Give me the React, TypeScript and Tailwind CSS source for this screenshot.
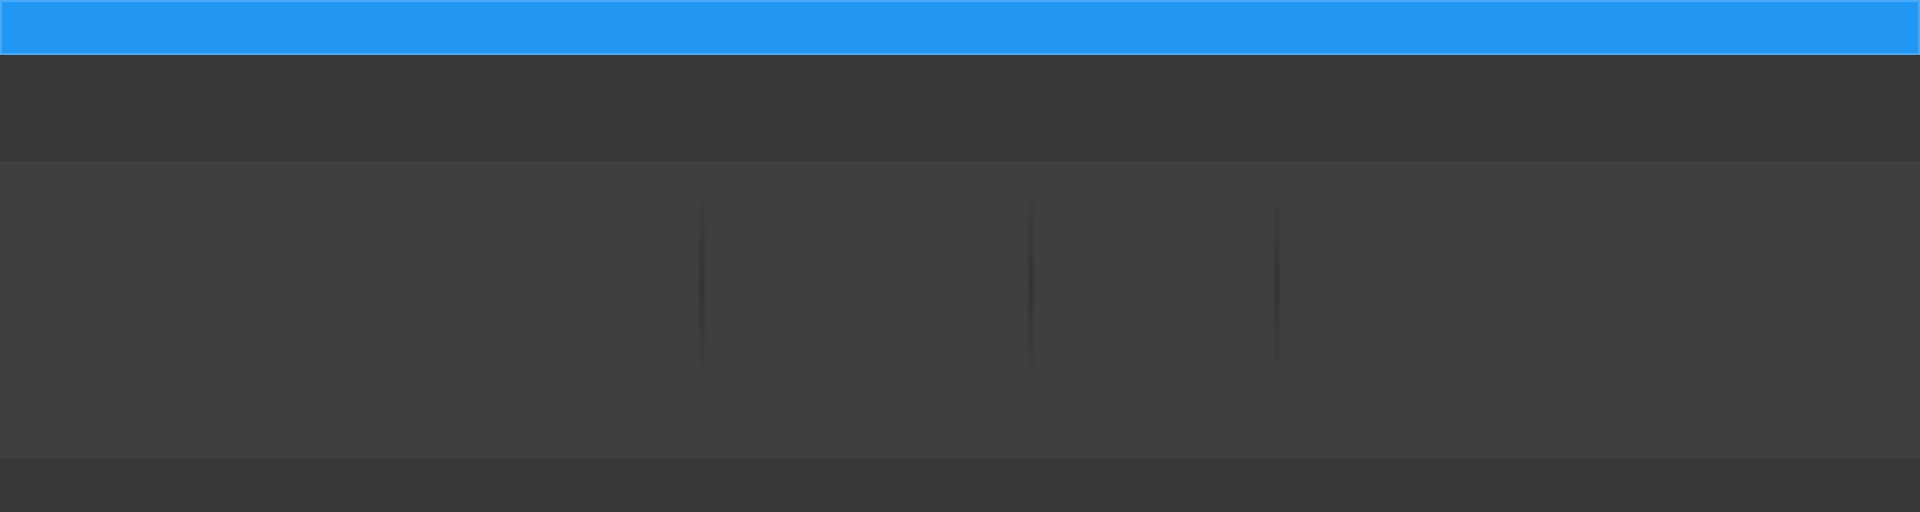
function Divider() {
  return (
    <div className="w-[4px] h-[196px] shrink-0 bg-gradient-to-b from-transparent via-[#303030] to-transparent blur-[1.5px]" />
  );
}

export default function App() {
  return (
    <div className="w-[1920px] h-[512px] bg-[#373737] flex flex-col font-['Liberation_Sans',sans-serif]">
      <header className="h-[55px] shrink-0 bg-[#2196f3] border-2 border-[#4aa9f6]" />
      <div className="h-[106px] shrink-0 bg-[#373737]" />
      <section className="h-[298px] shrink-0 bg-[#3f3f3f] flex items-start pt-[25px]">
        <div className="w-[700px] shrink-0" />
        <Divider />
        <div className="w-[325px] shrink-0" />
        <Divider />
        <div className="w-[242px] shrink-0" />
        <Divider />
        <div className="flex-1" />
      </section>
      <footer className="flex-1 bg-[#373737]" />
    </div>
  );
}
